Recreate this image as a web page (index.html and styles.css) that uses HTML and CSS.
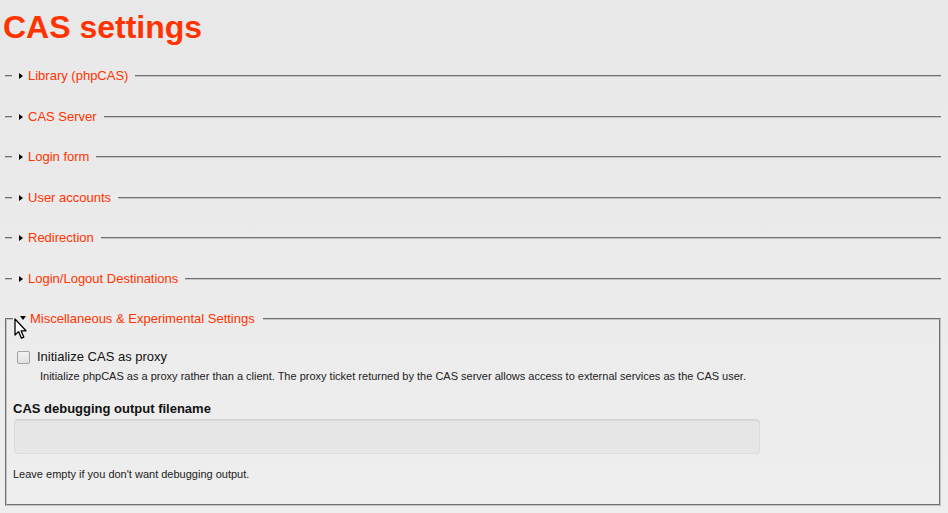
FILE: index.html
```html
<!DOCTYPE html>
<html lang="en">
<head>
<meta charset="utf-8">
<title>CAS settings</title>
<link rel="stylesheet" href="styles.css">
</head>
<body>
<div class="page">
  <h1 class="title">CAS settings</h1>
  <form class="settings">
    <fieldset class="group collapsed"><legend><span class="toggle">Library (phpCAS)</span></legend></fieldset>
    <fieldset class="group collapsed"><legend><span class="toggle">CAS Server</span></legend></fieldset>
    <fieldset class="group collapsed"><legend><span class="toggle">Login form</span></legend></fieldset>
    <fieldset class="group collapsed"><legend><span class="toggle">User accounts</span></legend></fieldset>
    <fieldset class="group collapsed"><legend><span class="toggle">Redirection</span></legend></fieldset>
    <fieldset class="group collapsed"><legend><span class="toggle">Login/Logout Destinations</span></legend></fieldset>
    <fieldset class="group expanded">
      <legend><span class="toggle">Miscellaneous &amp; Experimental Settings</span></legend>
      <div class="form-item check-item">
        <label class="check-label"><input type="checkbox" class="check"> Initialize CAS as proxy</label>
        <div class="description indent">Initialize phpCAS as a proxy rather than a client. The proxy ticket returned by the CAS server allows access to external services as the CAS user.</div>
      </div>
      <div class="form-item text-item">
        <label class="field-label" for="debugfile">CAS debugging output filename</label>
        <input type="text" id="debugfile" class="text-input">
        <div class="description">Leave empty if you don't want debugging output.</div>
      </div>
      <svg class="cursor" width="14" height="22" viewBox="0 0 14 22" aria-hidden="true">
        <path d="M1 1 L1 17 L4.6 13.6 L7.4 20.2 L9.8 19.2 L7.1 12.8 L12 12.8 Z" fill="#fff" stroke="#000" stroke-width="1.3" stroke-linejoin="round"/>
      </svg>
    </fieldset>
  </form>
</div>
</body>
</html>
```

FILE: styles.css
```css
html, body {
  margin: 0;
  padding: 0;
}
body {
  background: linear-gradient(#e8e8e8, #eeeeee);
  min-height: 513px;
  font-family: "Liberation Sans", Arial, sans-serif;
  font-size: 13px;
  color: #222;
}
.page {
  padding: 9px 7px 0 5px;
}
.title {
  margin: 0 0 0 -2px;
  font-size: 32px;
  line-height: 37px;
  font-weight: bold;
  color: #ff3300;
}
.settings {
  margin-top: 22.2px;
}
.group {
  margin: 0;
  min-width: 0;
  border: 2px groove #c4c4c4;
}
.group legend {
  padding: 0;
  margin: 0;
  line-height: 16px;
  font-size: 13px;
  color: #ff3300;
}
.toggle {
  display: inline-block;
}
.toggle::before {
  content: "";
  display: inline-block;
  width: 0;
  height: 0;
  vertical-align: 1px;
}
.collapsed {
  border-width: 2px 0 0 0;
  padding: 0 0 0 7px;
  height: 16px;
  margin-bottom: 22.55px;
}
.collapsed legend {
  padding: 0 7px;
}
.collapsed .toggle::before {
  border-top: 3.5px solid transparent;
  border-bottom: 3.5px solid transparent;
  border-left: 4px solid #000;
  margin-right: 5px;
}
.expanded {
  position: relative;
  margin-top: 3.2px;
  padding: 22px 6px 23px 6px;
}
.expanded legend {
  padding: 0 8px 0 7px;
}
.expanded .toggle::before {
  border-left: 3px solid transparent;
  border-right: 3px solid transparent;
  border-top: 4px solid #000;
  margin-right: 4px;
  vertical-align: 3px;
}
.form-item {
  display: flex;
  flex-direction: column;
  align-items: flex-start;
}
.check-label {
  display: flex;
  align-items: center;
  line-height: 16px;
  color: #111;
}
.check {
  appearance: none;
  -webkit-appearance: none;
  width: 13px;
  height: 13px;
  margin: 0 7px 0 4px;
  border: 1px solid #a3a3a3;
  border-radius: 2px;
  background: linear-gradient(#f3f3f3, #e1e1e1);
  box-sizing: border-box;
}
.description {
  font-size: 11px;
  line-height: 14px;
  color: #222;
}
.indent {
  margin: 4px 0 0 27px;
}
.text-item {
  margin-top: 18px;
}
.field-label {
  font-weight: bold;
  line-height: 16px;
  color: #111;
}
.text-input {
  width: 746px;
  height: 35px;
  box-sizing: border-box;
  margin: 2px 0 0 1px;
  border: 1px solid #dcdcdc;
  border-top-color: #d2d2d2;
  border-radius: 4px;
  background: #e6e6e6;
  box-shadow: inset 0 1px 1px rgba(0,0,0,0.06);
}
.text-item .description {
  margin-top: 13px;
}
.cursor {
  position: absolute;
  left: 7px;
  top: -9px;
}
```
